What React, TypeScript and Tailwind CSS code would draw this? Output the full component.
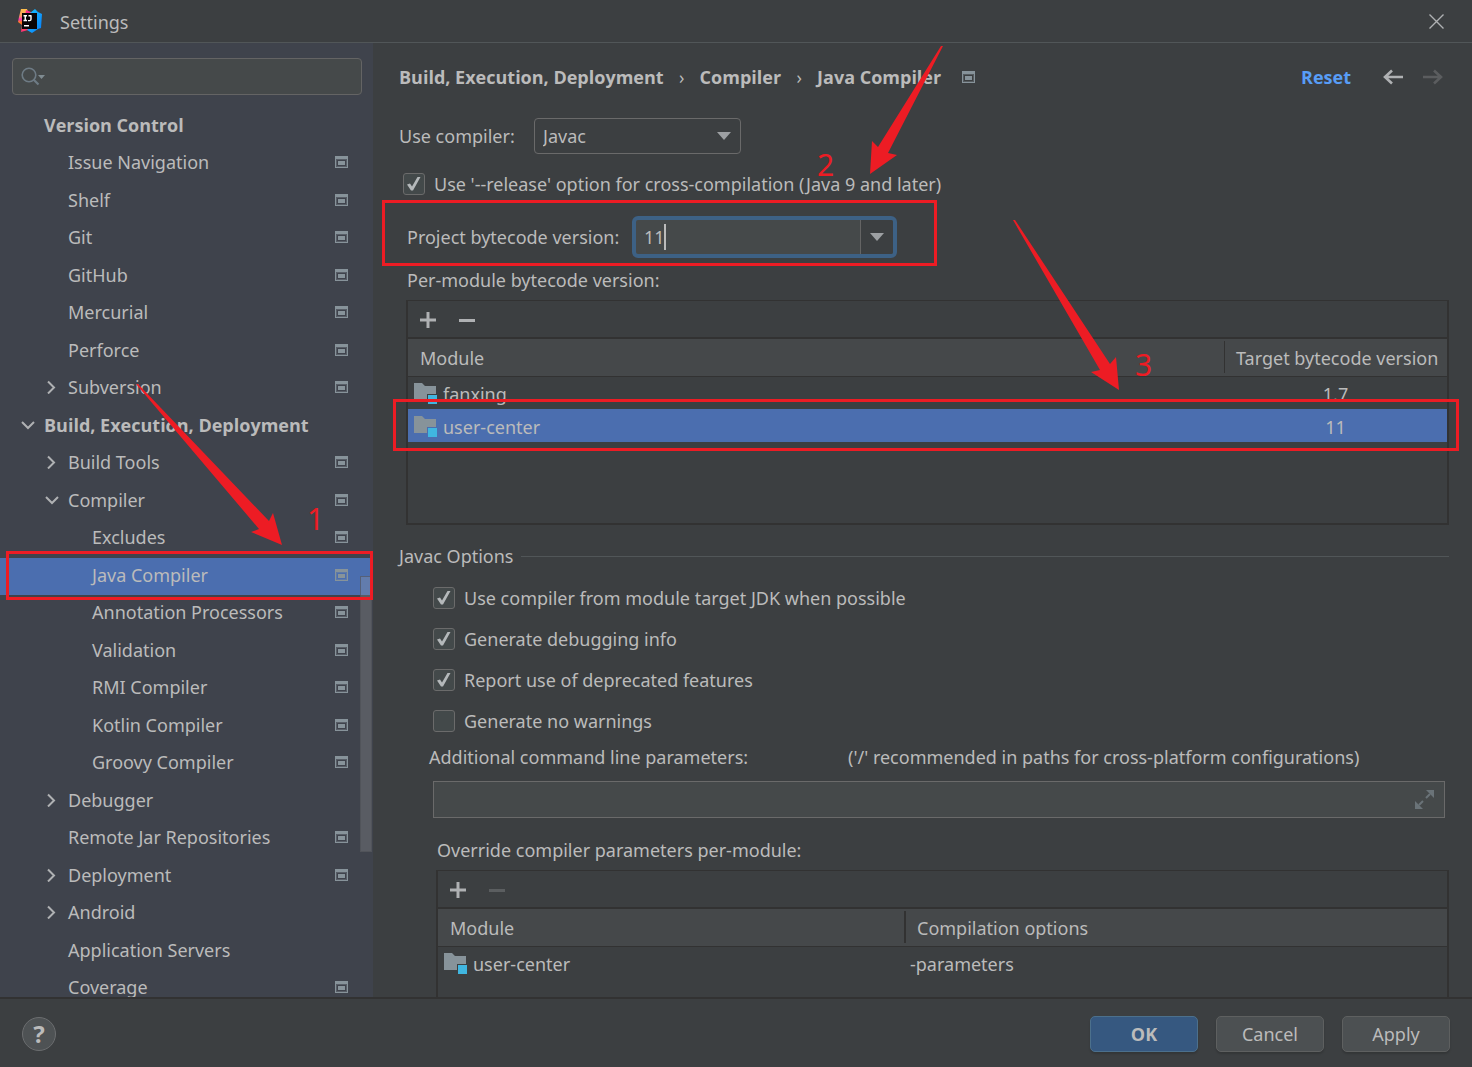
import React from "react";

function ProjectLevelIcon() {
  return (
    <svg width="13" height="12" viewBox="0 0 13 12" className="shrink-0" aria-hidden="true">
      <path fillRule="evenodd" fill="#87939a" d="M0 0h13v12H0zM1 3v8h11V3z" />
      <path fill="#87939a" d="M3 5h7v4H3z" />
      <path fill="none" stroke="#87939a" strokeOpacity="0.35" d="M1.5 3.5h10v7h-10z" />
    </svg>
  );
}

function ModuleIcon() {
  return (
    <svg width="24" height="22" viewBox="0 0 24 22" className="shrink-0" aria-hidden="true">
      <path fill="#87939a" d="M0 0h8l3 3h11v8h-9v6H0z" />
      <path fill="#40b6e0" d="M14 12h9v9h-9z" />
    </svg>
  );
}

function Chevron({ open }: { open: boolean }) {
  return open ? (
    <svg width="14" height="14" viewBox="0 0 14 14" fill="none" stroke="#afb1b3" strokeWidth="2" aria-hidden="true">
      <path d="M1 4l6 6 6-6" />
    </svg>
  ) : (
    <svg width="14" height="14" viewBox="0 0 14 14" fill="none" stroke="#afb1b3" strokeWidth="2" aria-hidden="true">
      <path d="M3 1.500l6 6-6 6" />
    </svg>
  );
}

function Logo() {
  return (
    <svg width="24" height="24" viewBox="0 0 24 24" aria-hidden="true">
      <defs>
        <linearGradient id="warm" x1="0" y1="0" x2="0" y2="1">
          <stop offset="0" stopColor="#fdc04b" />
          <stop offset="0.3" stopColor="#fb9a63" />
          <stop offset="0.45" stopColor="#fb2fb4" />
          <stop offset="0.58" stopColor="#fc801d" />
          <stop offset="0.75" stopColor="#fd5a4a" />
          <stop offset="1" stopColor="#fe2c7d" />
        </linearGradient>
        <linearGradient id="cool" x1="0" y1="0" x2="1" y2="1">
          <stop offset="0" stopColor="#19c5ff" />
          <stop offset="1" stopColor="#087cfa" />
        </linearGradient>
      </defs>
      <path fill="url(#warm)" d="M3 0h6l2 6v14l-1 1-7 2 1-7-4-3 1-5z" />
      <path fill="#fe2c8a" d="M8 1l5 2v4H7z" />
      <path fill="url(#cool)" d="M17 0l3 3 4 2-1 14-3 1-6 4-5-3 5-4-2-13z" />
      <path fill="#0a0407" d="M4 4h15v16H4z" />
      <path
        fill="none"
        stroke="#fff"
        strokeWidth="1.400"
        d="M5.500 6.700h3.500M7.250 6.700v4.800M5.500 11.500h3.500M10.500 6.700h3M13 6.700v3.500q0 1.400-1.400 1.400H10"
      />
      <path fill="#fff" d="M6 16h5v1.500H6z" />
    </svg>
  );
}

type Node = { label: string; level: 0 | 1 | 2; state?: "open" | "closed"; icon?: boolean; selected?: boolean };

const tree: Node[] = [
  { label: "Version Control", level: 0 },
  { label: "Issue Navigation", level: 1, icon: true },
  { label: "Shelf", level: 1, icon: true },
  { label: "Git", level: 1, icon: true },
  { label: "GitHub", level: 1, icon: true },
  { label: "Mercurial", level: 1, icon: true },
  { label: "Perforce", level: 1, icon: true },
  { label: "Subversion", level: 1, state: "closed", icon: true },
  { label: "Build, Execution, Deployment", level: 0, state: "open" },
  { label: "Build Tools", level: 1, state: "closed", icon: true },
  { label: "Compiler", level: 1, state: "open", icon: true },
  { label: "Excludes", level: 2, icon: true },
  { label: "Java Compiler", level: 2, icon: true, selected: true },
  { label: "Annotation Processors", level: 2, icon: true },
  { label: "Validation", level: 2, icon: true },
  { label: "RMI Compiler", level: 2, icon: true },
  { label: "Kotlin Compiler", level: 2, icon: true },
  { label: "Groovy Compiler", level: 2, icon: true },
  { label: "Debugger", level: 1, state: "closed" },
  { label: "Remote Jar Repositories", level: 1, icon: true },
  { label: "Deployment", level: 1, state: "closed", icon: true },
  { label: "Android", level: 1, state: "closed" },
  { label: "Application Servers", level: 1 },
  { label: "Coverage", level: 1, icon: true },
];

const indent = ["pl-5", "pl-11", "pl-[68px]"];

function TreeRow({ node }: { node: Node }) {
  return (
    <li
      className={`relative flex items-center pr-[25px] pb-1 odd:h-[37px] even:h-[38px] ${indent[node.level]} ${
        node.selected ? "bg-[#4b6eaf]" : ""
      } ${node.level === 0 ? "font-['Open_Sans',sans-serif] font-bold" : ""}`}
    >
      <span className="flex w-6 shrink-0 items-center pl-px">{node.state && <Chevron open={node.state === "open"} />}</span>
      <span className="flex-1 whitespace-nowrap">{node.label}</span>
      {node.icon && <ProjectLevelIcon />}
      {node.selected && (
        <span className="pointer-events-none absolute -top-[7px] right-0 -bottom-[5px] left-[6px] z-20 border-[3px] border-[#ed1c24]" />
      )}
    </li>
  );
}

function Sidebar() {
  return (
    <aside className="relative w-[373px] shrink-0 bg-[#3f434c] pt-[15px]">
      <div className="relative mr-[11px] ml-3 flex h-[37px] items-center rounded border border-[#646464] bg-[#45494a]">
        <svg width="26" height="20" viewBox="0 0 26 20" fill="none" className="absolute left-2" aria-hidden="true">
          <circle cx="8" cy="8" r="6.800" stroke="#6e7b85" strokeWidth="1.600" />
          <path d="M12.500 12.500l5 5" stroke="#6e7b85" strokeWidth="2.200" />
          <path d="M17 8h7l-3.500 4z" fill="#7f8b91" />
        </svg>
        <input type="text" aria-label="Search settings" className="h-full w-full bg-transparent pr-2 pl-10 outline-none" />
      </div>
      <ul className="mt-[13px]">
        {tree.map((n) => (
          <TreeRow key={n.label} node={n} />
        ))}
      </ul>
      <div className="absolute top-[533px] right-px h-[276px] w-3 border border-[#4c4f55]/60 bg-[#a6a6a6]/25" />
    </aside>
  );
}

function CheckRow({ id, label, checked }: { id: string; label: string; checked?: boolean }) {
  return (
    <div className="flex h-6 items-center">
      <span className="relative flex size-[22px]">
        <input
          id={id}
          type="checkbox"
          defaultChecked={checked}
          className="peer size-[22px] appearance-none rounded-[3px] border border-[#6b6b6b] bg-[#43494a]"
        />
        <svg
          viewBox="0 0 22 22"
          className="pointer-events-none absolute inset-0 hidden size-[22px] peer-checked:block"
          fill="#b4b8ba"
          aria-hidden="true"
        >
          <path d="M4 11.500L7 10.500L9 13.500L14.500 4H17.500L10 17.500H8Z" />
        </svg>
      </span>
      <label htmlFor={id} className="pl-[9px] whitespace-nowrap">
        {label}
      </label>
    </div>
  );
}

function PlusIcon() {
  return (
    <svg width="16" height="16" viewBox="0 0 16 16" fill="#afb1b3" aria-hidden="true">
      <path d="M6.500 0h3v16h-3z" />
      <path d="M0 6.500h16v3H0z" />
    </svg>
  );
}

function Toolbar({ canRemove }: { canRemove: boolean }) {
  return (
    <div className="flex h-[38px] items-center gap-[23px] border-b-2 border-[#323232] pt-[2px] pl-3">
      <button type="button" aria-label="Add" className="flex size-4 items-center justify-center">
        <PlusIcon />
      </button>
      <button type="button" aria-label="Remove" disabled={!canRemove} className="flex size-4 items-center justify-center">
        <span className={`h-[3px] w-4 ${canRemove ? "bg-[#afb1b3]" : "bg-[#5b5e60]"}`} />
      </button>
    </div>
  );
}

function DownArrow() {
  return (
    <svg width="14" height="8" viewBox="0 0 14 8" fill="#9da0a3" aria-hidden="true">
      <path d="M0 0h14L7 8z" />
    </svg>
  );
}

function Breadcrumb() {
  return (
    <div className="flex h-[68px] items-center font-['Open_Sans',sans-serif]">
      <nav aria-label="Breadcrumb" className="flex items-center font-bold whitespace-nowrap">
        <span>Build, Execution, Deployment</span>
        <span className="w-9 text-center font-normal">›</span>
        <span>Compiler</span>
        <span className="w-9 text-center font-normal">›</span>
        <span className="pr-[21px]">Java Compiler</span>
        <ProjectLevelIcon />
      </nav>
      <div className="ml-auto flex items-center pr-[6px]">
        <a href="#reset" className="pr-8 font-bold text-[#589df6]">
          Reset
        </a>
        <button type="button" aria-label="Back" className="mr-5">
          <svg width="20" height="16" viewBox="0 0 20 16" fill="none" stroke="#afb1b3" strokeWidth="2.600" aria-hidden="true">
            <path d="M20 8H2M9 1.500L2 8l7 6.500" />
          </svg>
        </button>
        <button type="button" aria-label="Forward" disabled>
          <svg width="20" height="16" viewBox="0 0 20 16" fill="none" stroke="#5b5d5f" strokeWidth="2.600" aria-hidden="true">
            <path d="M0 8h18M11 1.500L18 8l-7 6.500" />
          </svg>
        </button>
      </div>
    </div>
  );
}

function ModuleCell({ name }: { name: string }) {
  return (
    <span className="flex items-center gap-[5px]">
      <ModuleIcon />
      {name}
    </span>
  );
}

function BytecodeTable() {
  return (
    <div className="mt-2 ml-[7px] h-[225px] border-2 border-t border-[#323232]">
      <Toolbar canRemove />
      <table className="w-full table-fixed border-collapse text-left">
        <thead>
          <tr className="h-[37px] border-b border-[#323232] bg-[#45484a]">
            <th className="p-0 pt-px pl-3 font-normal">Module</th>
            <th className="w-[223px] p-0 font-normal whitespace-nowrap">
              <span className="flex h-8 items-center border-l border-[#323232] pt-px pl-[11px]">Target bytecode version</span>
            </th>
          </tr>
        </thead>
        <tbody>
          <tr className="h-[33px]">
            <td className="p-0 pt-[2px] pl-[6px]">
              <ModuleCell name="fanxing" />
            </td>
            <td className="p-0 pt-[2px] text-center">1.7</td>
          </tr>
          <tr className="relative h-[33px] bg-[#4b6eaf]">
            <td className="p-0 pt-[2px] pl-[6px]">
              <ModuleCell name="user-center" />
              <span className="pointer-events-none absolute -top-[10px] -right-[12px] -bottom-[9px] -left-[15px] border-[3px] border-[#ed1c24]" />
            </td>
            <td className="p-0 pt-[2px] text-center">11</td>
          </tr>
        </tbody>
      </table>
    </div>
  );
}

function OverrideTable() {
  return (
    <div className="mt-2 ml-[37px] h-[225px] border-2 border-t border-[#323232]">
      <Toolbar canRemove={false} />
      <table className="w-full table-fixed border-collapse text-left">
        <thead>
          <tr className="h-[37px] border-b border-[#323232] bg-[#45484a]">
            <th className="w-[466px] p-0 pt-px pl-3 font-normal">Module</th>
            <th className="p-0 font-normal">
              <span className="flex h-8 items-center border-l-2 border-[#323232] pt-px pl-[11px]">Compilation options</span>
            </th>
          </tr>
        </thead>
        <tbody>
          <tr className="h-[35px]">
            <td className="p-0 pl-[6px]">
              <ModuleCell name="user-center" />
            </td>
            <td className="p-0 pl-[6px]">-parameters</td>
          </tr>
        </tbody>
      </table>
    </div>
  );
}

function Annotations() {
  return (
    <div className="pointer-events-none absolute inset-0 z-30 overflow-hidden text-[#ed1c24]">
      <svg width="1472" height="1067" viewBox="0 0 1472 1067" fill="#ed1c24" className="absolute top-0 left-0" aria-hidden="true">
        <path d="M136 384L138 384L269 521L273 513L282 545L251 532L259 529Z" />
        <path d="M941 46L943 46L888 153L897 155L870 174L872 141L878 147Z" />
        <path d="M1013 220L1015 220L1110 364L1116 357L1119 390L1091 372L1100 370Z" />
      </svg>
      <span className="absolute top-[499px] left-[307px] text-[30px] leading-10">1</span>
      <span className="absolute top-[145px] left-[817px] text-[30px] leading-10">2</span>
      <span className="absolute top-[345px] left-[1135px] text-[30px] leading-10">3</span>
    </div>
  );
}

const footerButton = "h-9 w-[108px] rounded-[5px] border shadow-[0_2px_2px_rgba(0,0,0,0.15)]";

export default function App() {
  return (
    <div className="relative flex h-screen flex-col overflow-hidden bg-[#3c3f41] font-['Noto_Sans',sans-serif] text-[18px] leading-6 text-[#bbbbbb]">
      <header className="flex h-[43px] shrink-0 items-center border-b border-[#515658] pr-7 pl-[18px]">
        <Logo />
        <h1 className="pt-px pl-[18px]">Settings</h1>
        <button type="button" aria-label="Close" className="ml-auto">
          <svg width="15" height="15" viewBox="0 0 15 15" stroke="#afb1b3" strokeWidth="1.400" aria-hidden="true">
            <path d="M0.500 0.500l14 14M14.500 0.500l-14 14" />
          </svg>
        </button>
      </header>

      <div className="flex min-h-0 flex-1 overflow-hidden">
        <Sidebar />
        <main className="min-w-0 flex-1 overflow-hidden pr-[23px] pl-[26px]">
          <Breadcrumb />

          <div className="mt-[7px] flex items-center">
            <label htmlFor="compiler" className="w-[135px]">
              Use compiler:
            </label>
            <div className="relative flex items-center">
              <select
                id="compiler"
                defaultValue="Javac"
                className="h-9 w-[207px] appearance-none rounded border border-[#6a6a6a] pl-2"
              >
                <option>Javac</option>
              </select>
              <span className="pointer-events-none absolute right-[10px]">
                <DownArrow />
              </span>
            </div>
          </div>

          <div className="mt-[18px] pl-1">
            <CheckRow id="release" label="Use '--release' option for cross-compilation (Java 9 and later)" checked />
          </div>

          <div className="relative mt-5 flex h-[42px] items-center pl-2">
            <label htmlFor="bytecode" className="w-[225px] whitespace-nowrap">
              Project bytecode version:
            </label>
            <div className="flex h-[42px] w-[265px] overflow-hidden rounded-md border-4 border-[#3d6185] bg-[#45494a]">
              <div className="relative flex min-w-0 flex-1 items-center">
                <input id="bytecode" type="text" defaultValue="11" className="h-full w-full bg-transparent pl-2 outline-none" />
                <span className="absolute left-7 h-[26px] w-[2px] bg-[#bbbbbb]" />
              </div>
              <button
                type="button"
                aria-label="Show versions"
                className="flex w-[33px] items-center justify-center border-l border-[#646464] bg-[#3c3f41]"
              >
                <DownArrow />
              </button>
            </div>
            <span className="pointer-events-none absolute -top-4 -bottom-2 -left-[17px] w-[555px] border-[3px] border-[#ed1c24]" />
          </div>

          <h2 className="mt-[10px] pl-2">Per-module bytecode version:</h2>
          <BytecodeTable />

          <div className="mt-[19px] flex items-center gap-2">
            <h2>Javac Options</h2>
            <span className="h-px flex-1 bg-[#515658]" />
          </div>
          <div className="mt-[18px] flex flex-col gap-[17px] pl-[34px]">
            <CheckRow id="target-jdk" label="Use compiler from module target JDK when possible" checked />
            <CheckRow id="debug" label="Generate debugging info" checked />
            <CheckRow id="deprecated" label="Report use of deprecated features" checked />
            <CheckRow id="no-warnings" label="Generate no warnings" />
          </div>

          <div className="mt-3 flex pl-[30px] whitespace-nowrap">
            <label htmlFor="params" className="w-[419px]">
              Additional command line parameters:
            </label>
            <span>('/' recommended in paths for cross-platform configurations)</span>
          </div>
          <div className="relative mt-3 mr-1 ml-[34px] flex h-[37px] items-center">
            <input id="params" type="text" className="h-full w-full border border-[#6a6a6a] bg-[#45494a] pr-10 pl-2 outline-none" />
            <button type="button" aria-label="Expand" className="absolute right-[11px]">
              <svg width="19" height="19" viewBox="0 0 19 19" fill="#6a7378" aria-hidden="true">
                <path d="M11 0h8v8zM0 11v8h8z" />
                <path d="M15 4l-4 4M4 15l4-4" stroke="#6a7378" strokeWidth="2" />
              </svg>
            </button>
          </div>

          <h2 className="mt-5 pl-[38px]">Override compiler parameters per-module:</h2>
          <OverrideTable />
        </main>
      </div>

      <footer className="flex h-[70px] shrink-0 items-center gap-[18px] border-t-2 border-[#323232] pt-[2px] pr-[22px] pl-[22px]">
        <button type="button" className="mr-auto size-[34px] rounded-full border border-[#6b6d6f] bg-[#4e5254] text-[24px] font-bold">
          ?
        </button>
        <button type="button" className={`${footerButton} border-[#4c708c] bg-[#365880] font-['Open_Sans',sans-serif] font-bold`}>
          OK
        </button>
        <button type="button" className={`${footerButton} border-[#5e6060] bg-[#4c5052]`}>
          Cancel
        </button>
        <button type="button" className={`${footerButton} border-[#5e6060] bg-[#4c5052]`}>
          Apply
        </button>
      </footer>

      <Annotations />
    </div>
  );
}
